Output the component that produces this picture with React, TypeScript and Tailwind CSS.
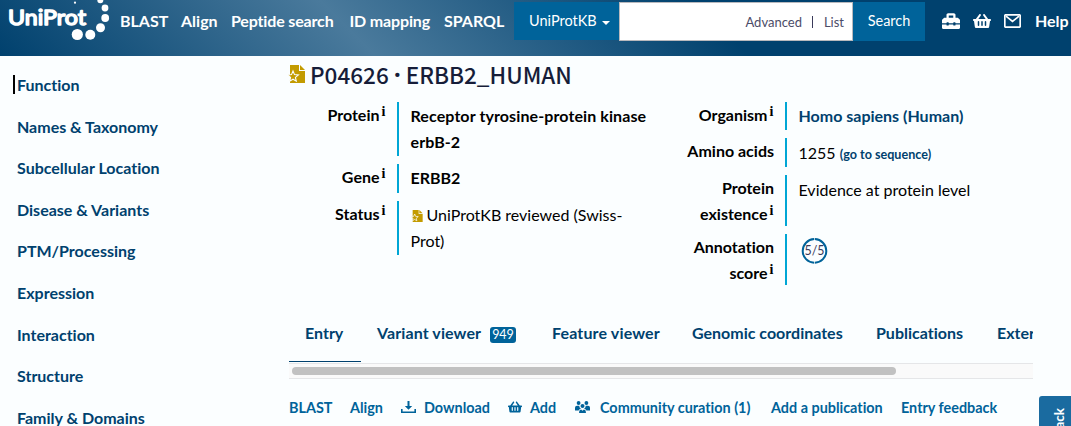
import React from "react";
import { FaToolbox, FaShoppingBasket } from "react-icons/fa";

const sections = [
  "Function",
  "Names & Taxonomy",
  "Subcellular Location",
  "Disease & Variants",
  "PTM/Processing",
  "Expression",
  "Interaction",
  "Structure",
  "Family & Domains",
];

function Logo() {
  return (
    <svg className="block h-[56px] w-[112px] shrink-0" viewBox="0 0 112 56" fill="#fff">
      <text
        x="8"
        y="25"
        textLength="78"
        lengthAdjust="spacingAndGlyphs"
        fontFamily="Lato, sans-serif"
        fontSize="21"
        fontWeight="400"
        stroke="#fff"
        strokeWidth="1.5"
        strokeLinejoin="round"
      >
        UniProt
      </text>
      <circle cx="75" cy="2.7" r="1.1" />
      <circle cx="100.3" cy="0.3" r="3" />
      <circle cx="105" cy="8" r="3.4" />
      <circle cx="105.2" cy="18" r="3.9" />
      <circle cx="100.5" cy="27.8" r="4.5" />
      <circle cx="90.3" cy="34.7" r="5" />
      <circle cx="77.3" cy="34.5" r="5.6" />
    </svg>
  );
}

function ReviewedIcon({ className }: { className: string }) {
  return (
    <svg className={className} viewBox="0 0 17 18">
      <path d="M2 0h9v6h6v12H2z" fill="#c39b00" />
      <path d="M12 0l5 5h-5z" fill="#c39b00" />
      <path
        d="M5 6l1.5 3.6 3.9.3-3 2.5.9 3.8L5 14.2l-3.3 2 .9-3.8-3-2.5 3.9-.3z"
        fill="#c39b00"
        stroke="#fbfeff"
        strokeWidth="1.1"
      />
    </svg>
  );
}

function Info() {
  return (
    <sup className="relative -top-[5px] ml-[1.5px] inline-block h-3 w-[5px] text-center align-baseline font-[Liberation_Serif,serif] text-[14px] leading-3 font-bold">
      i
    </sup>
  );
}

function Row({
  label,
  info = true,
  labelWidth,
  height,
  children,
}: {
  label: string;
  info?: boolean;
  labelWidth: string;
  height: string;
  children: React.ReactNode;
}) {
  return (
    <div className={`flex ${height}`}>
      <div className={`${labelWidth} shrink-0 pr-[11px] text-right font-bold leading-[26px]`}>
        {label}
        {info && <Info />}
      </div>
      <div className="flex-1 border-l-2 border-[#00a6d5] pt-px pl-[11.5px] leading-[26px]">{children}</div>
    </div>
  );
}

function Score() {
  return (
    <svg className="mt-[2px] ml-[2.5px] block size-[27px]" viewBox="0 0 27 27">
      <circle
        cx="13.5"
        cy="13.9"
        r="11.8"
        fill="none"
        stroke="#00639a"
        strokeWidth="2"
        pathLength="100"
        strokeDasharray="49 1"
        strokeDashoffset="-25.5"
      />
      <text x="13.5" y="18" textAnchor="middle" fontFamily="Lato, sans-serif" fontSize="12.4" fill="#3a3a5a">
        5/5
      </text>
    </svg>
  );
}

function DownloadIcon() {
  return (
    <svg className="h-[12px] w-[15px]" viewBox="0 0 15 12" fill="#00639a">
      <path d="M6.5 0h2v5h2.7L7.5 8.7 3.8 5h2.7z" />
      <path d="M0 8h1.6v2.4h11.8V8H15v4H0z" />
    </svg>
  );
}

function CommunityIcon() {
  return (
    <svg className="h-[12px] w-[15px]" viewBox="0 0 15 12" fill="#00639a">
      <circle cx="3.6" cy="2" r="1.9" />
      <circle cx="11.4" cy="2" r="1.9" />
      <circle cx="7.5" cy="5" r="2" />
      <path d="M0 9.4V6.7q0-2 2-2h2.2q.1 2 1.7 3-1.6.2-2.3 1.7zM15 9.4V6.7q0-2-2-2h-2.2q-.1 2-1.7 3 1.6.2 2.3 1.7z" />
      <path d="M4.1 12v-1q0-2.6 2-2.6L7.5 9.7l1.4-1.3q2 0 2 2.6v1z" />
    </svg>
  );
}

export default function App() {
  return (
    <div className="relative flex h-[426px] w-[1071px] flex-col overflow-hidden bg-[#fbfeff] font-[Lato,sans-serif] text-base text-black [font-variant-ligatures:none]">
      <header className="flex h-[56px] shrink-0 items-start bg-[linear-gradient(45deg,#00416e_0%,#4a7a9c_33.3%,#00416e_66.6%)] whitespace-nowrap text-white">
        <Logo />
        <nav className="flex shrink-0 gap-[13px] pt-[9px] pl-2 font-bold leading-6">
          <a className="w-[48px]">BLAST</a>
          <a className="w-[37px]">Align</a>
          <a className="w-[105.5px] tracking-[-0.01em]">Peptide search</a>
          <a className="w-[81.5px] tracking-[-0.01em]">ID mapping</a>
          <a className="w-[59px]">SPARQL</a>
        </nav>
        <div className="mt-[2px] ml-[11px] flex h-[39px]">
          <div className="flex h-[38px] w-[105px] items-center bg-[#00639a] pl-[15px] text-[14.5px]">
            UniProtKB
            <span className="mt-[3px] ml-[5px] border-x-4 border-t-4 border-x-transparent border-t-white" />
          </div>
          <div className="flex h-[39px] w-[234px] items-center justify-end border border-[#b9b9bd] bg-white pr-2 text-[13px] text-[#4c4c68]">
            <span className="mt-0.5">Advanced</span>
            <span className="ml-[10px] h-3 w-px bg-[#3a3a5a]" />
            <span className="mt-0.5 ml-[11px]">List</span>
          </div>
          <div className="flex w-[72px] items-center justify-center bg-[#00639a] pb-px text-[14.5px]">Search</div>
        </div>
        <div className="flex items-center pt-[9px] pl-[17px] leading-6">
          <FaToolbox className="-mt-px size-[18px]" />
          <FaShoppingBasket className="-mt-px ml-[13px] size-[18px]" />
          <svg className="-mt-px ml-[13px] h-[14px] w-[17px]" viewBox="0 0 17 14" fill="none" stroke="#fff" strokeWidth="1.7">
            <rect x=".8" y=".8" width="15.4" height="12.4" rx="1" />
            <path d="M2 2.2l6.5 5.2L15 2.2" />
          </svg>
          <span className="ml-[14px] font-bold">Help</span>
        </div>
      </header>

      <div className="flex min-h-0 flex-1">
        <aside className="w-[289px] shrink-0 pt-[15px] pl-[13px] font-bold text-[#00416e]">
          {sections.map((name, i) => (
            <div key={name} className="flex h-[41.6px] items-start">
              <div
                className={
                  i === 0
                    ? "mt-1 h-[19px] border-l-2 border-black pl-0.5 leading-[19px]"
                    : "mt-1 h-[19px] border-l-2 border-transparent pl-0.5 leading-[19px]"
                }
              >
                {name}
              </div>
            </div>
          ))}
        </aside>

        <main className="w-[744px] shrink-0">
          <h1 className="flex h-[46px] items-start font-['Noto_Sans_CJK_SC',sans-serif] text-[22.5px] leading-[36px] font-medium whitespace-pre text-[#161d39]">
            <ReviewedIcon className="mt-[9px] mr-[5px] -ml-px h-[18px] w-[17px]" />
            P04626
            <span className="w-[17px] text-center font-[Lato,sans-serif] font-bold">·</span>
            ERBB2_HUMAN
          </h1>
          <div className="flex h-[206px]">
            <div className="flex w-[373px] flex-col gap-2">
              <Row label="Protein" labelWidth="w-[108px]" height="h-[54px]">
                <strong className="tracking-[0.1px]">Receptor tyrosine-protein kinase erbB-2</strong>
              </Row>
              <Row label="Gene" labelWidth="w-[108px]" height="h-[29px]">
                <strong>ERBB2</strong>
              </Row>
              <Row label="Status" labelWidth="w-[108px]" height="h-[54px]">
                <ReviewedIcon className="mr-1 inline-block h-[12px] w-[12px] align-[-1px]" />
                UniProtKB reviewed (Swiss-
                <br />
                Prot)
              </Row>
            </div>
            <div className="flex flex-1 flex-col gap-2">
              <Row label="Organism" labelWidth="w-[123px]" height="h-[28px]">
                <strong className="text-[#00416e]">Homo sapiens (Human)</strong>
              </Row>
              <Row label="Amino acids" info={false} labelWidth="w-[123px]" height="h-[29px]">
                <span className="relative top-px">
                  1255 <strong className="text-[12.6px] text-[#00416e]">(go to sequence)</strong>
                </span>
              </Row>
              <Row label="Protein existence" labelWidth="w-[123px]" height="h-[51px]">
                <span className="relative top-px">Evidence at protein level</span>
              </Row>
              <Row label="Annotation score" labelWidth="w-[123px]" height="h-[51px]">
                <Score />
              </Row>
            </div>
          </div>

          <div className="flex h-[54px] overflow-hidden font-bold leading-[50px] whitespace-nowrap text-[#00416e]">
            <div className="w-[72px] shrink-0 border-b border-[#00416e] pl-4">Entry</div>
            <div className="flex w-[175px] shrink-0 items-start pl-4">
              <span className="w-[105px] tracking-[0.1px]">Variant viewer</span>
              <span className="mt-[19px] ml-2 h-4 w-[26px] rounded-[3px] bg-[#00639a] text-center text-[12.5px] leading-4 font-normal text-white">
                949
              </span>
            </div>
            <div className="w-[140px] shrink-0 pl-4 tracking-[0.15px]">Feature viewer</div>
            <div className="w-[184px] shrink-0 pl-4">Genomic coordinates</div>
            <div className="w-[121px] shrink-0 pl-4">Publications</div>
            <div className="shrink-0 pl-4">External links</div>
          </div>
          <div className="mt-px h-4 border-y border-[#e5e6e8] bg-[#fafafa] pt-[3px] pl-[3px]">
            <div className="h-2 w-[604px] rounded-full bg-[#c1c1c1]" />
          </div>

          <div className="flex h-[57px] items-center text-[14.4px] font-bold whitespace-nowrap text-[#00639a]">
            <span className="w-[61px]">BLAST</span>
            <span className="w-[51px]">Align</span>
            <span className="flex w-[107px] items-center gap-2">
              <DownloadIcon />
              Download
            </span>
            <span className="flex w-[67px] items-center gap-2">
              <FaShoppingBasket className="size-[14px]" />
              Add
            </span>
            <span className="flex w-[196px] items-center gap-[10px]">
              <CommunityIcon />
              Community curation (1)
            </span>
            <span className="w-[130px]">Add a publication</span>
            <span>Entry feedback</span>
          </div>
        </main>
      </div>

      <div className="absolute top-[396px] left-[1039px] h-[90px] w-[40px] rounded-tl-[3px] bg-[#1a6ba0]">
        <span className="absolute top-[12px] left-[10px] rotate-180 text-[13.5px] leading-5 font-bold text-white [writing-mode:vertical-rl]">
          Feedback
        </span>
      </div>
    </div>
  );
}
